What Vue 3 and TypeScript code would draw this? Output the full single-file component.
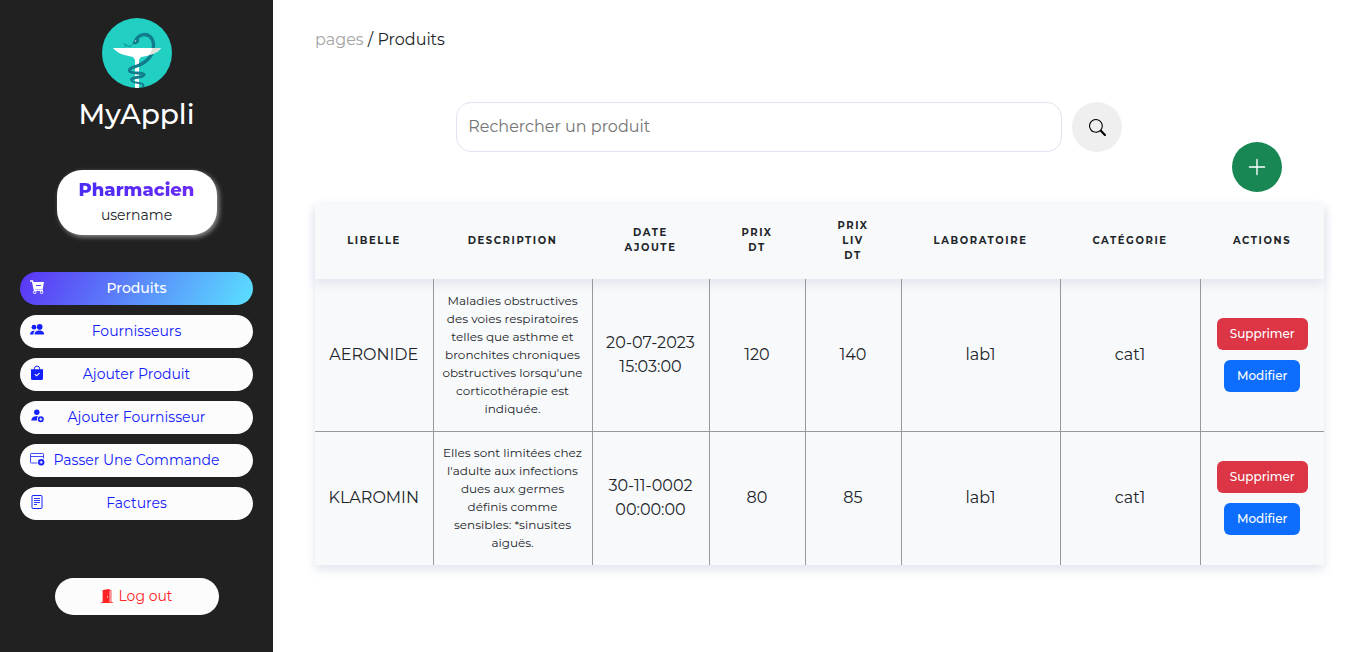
<script setup lang="ts">
import { ref } from 'vue'

interface NavItem {
  label: string
  icon: string
}

interface Product {
  name: string
  description: string
  date: string
  price: number
  deliveryPrice: number
  lab: string
  category: string
}

const active = ref('Produits')
const query = ref('')

const navItems: NavItem[] = [
  { label: 'Produits', icon: 'cart' },
  { label: 'Fournisseurs', icon: 'people' },
  { label: 'Ajouter Produit', icon: 'bag' },
  { label: 'Ajouter Fournisseur', icon: 'person-add' },
  { label: 'Passer Une Commande', icon: 'window-add' },
  { label: 'Factures', icon: 'document' },
]

const columns = [
  { key: 'name', label: 'Libelle' },
  { key: 'description', label: 'Description' },
  { key: 'date', label: 'Date\nAjoute' },
  { key: 'price', label: 'Prix\nDT' },
  { key: 'delivery', label: 'Prix\nLiv\nDT' },
  { key: 'lab', label: 'Laboratoire' },
  { key: 'category', label: 'Catégorie' },
  { key: 'actions', label: 'Actions' },
]

const products: Product[] = [
  {
    name: 'AERONIDE',
    description:
      "Maladies obstructives\ndes voies respiratoires\ntelles que asthme et\nbronchites chroniques\nobstructives lorsqu'une\ncorticothérapie est\nindiquée.",
    date: '20-07-2023\n15:03:00',
    price: 120,
    deliveryPrice: 140,
    lab: 'lab1',
    category: 'cat1',
  },
  {
    name: 'KLAROMIN',
    description:
      "Elles sont limitées chez\nl'adulte aux infections\ndues aux germes\ndéfinis comme\nsensibles: *sinusites\naiguës.",
    date: '30-11-0002\n00:00:00',
    price: 80,
    deliveryPrice: 85,
    lab: 'lab1',
    category: 'cat1',
  },
]
</script>

<template>
  <div class="layout">
    <aside class="sidebar">
      <svg class="logo" viewBox="0 0 70 70" aria-hidden="true">
        <defs>
          <clipPath id="logo-clip"><circle cx="35" cy="35" r="35" /></clipPath>
        </defs>
        <g clip-path="url(#logo-clip)">
          <rect width="70" height="70" fill="#22cfc3" />
          <path d="M33.500 23C36 17 43 14.500 48 18.500C52 22 52.800 30 49.500 36.500C46.500 42 42 45 37 47" fill="none" stroke="#107c8c" stroke-width="3.400" />
          <path d="M11 30H59C56 34.500 48 38 39 39L37 42V70H33V42L31 39C22 37.500 14 34.500 11 30Z" fill="#fff" />
          <path d="M50 30H59C57 33.500 53 35.500 48 37Z" fill="#dfe3dc" />
          <path d="M48.500 38C45 43.500 41 46 35 48C30 49.500 27 50.500 27.500 53C29 56.500 41 53.500 42 56.500C42.500 60 31 58.500 29.500 61.500" fill="none" stroke="#107c8c" stroke-width="3" stroke-linecap="round" />
          <path d="M29.500 61.500C29 65.500 38 64 40.500 66C42 67 41.500 68.500 40 69.500" fill="none" stroke="#107c8c" stroke-width="2" />
          <path d="M30.500 26C31 23 33 20.500 35.500 20.500C38 21 37.500 24 36 25C34.500 26.500 32 26.500 30.500 26Z" fill="#107c8c" />
          <circle cx="33.500" cy="23" r=".7" fill="#d8e8dc" />
          <path d="M30.500 26.500C28.500 29 26 28.500 24.500 27L21.500 25.500M25 27.500L22.500 28.500" fill="none" stroke="#107c8c" stroke-width=".8" />
        </g>
      </svg>
      <h1 class="brand">MyAppli</h1>

      <div class="profile">
        <strong class="role">Pharmacien</strong>
        <span class="username">username</span>
      </div>

      <nav class="nav">
        <a
          v-for="item in navItems"
          :key="item.label"
          href="#"
          class="nav-link"
          :class="{ active: active === item.label }"
          @click.prevent="active = item.label"
        >
          <svg class="nav-icon" viewBox="0 0 16 16" fill="currentColor" aria-hidden="true">
            <template v-if="item.icon === 'cart'">
              <path d="M1 2H3.500L5.500 11.200H14" fill="none" stroke="currentColor" stroke-width="1.400" />
              <path fill-rule="evenodd" d="M3.800 3H15L13.700 10.200H5.300ZM7 6H12V7H7Z" />
              <circle cx="5.700" cy="13.300" r="1.300" fill="none" stroke="currentColor" />
              <circle cx="12.600" cy="13.300" r="1.300" fill="none" stroke="currentColor" />
            </template>
            <template v-else-if="item.icon === 'people'">
              <circle cx="5" cy="5.200" r="2.400" />
              <circle cx="10.700" cy="4.900" r="2.800" />
              <path d="M1 12.500C1 9.800 2.800 8.500 5.800 8.700C4.900 9.700 4.500 11 4.500 12.500ZM5.500 12.500C5.500 9.700 7.400 8.500 10.300 8.500S15.200 9.800 15.200 12.500Z" />
            </template>
            <template v-else-if="item.icon === 'bag'">
              <path d="M5.300 5V3.800A2.700 2.700 0 0 1 10.700 3.800V5" fill="none" stroke="currentColor" />
              <path fill-rule="evenodd" d="M2 4.300H14V13.500Q14 15 12.500 15H3.500Q2 15 2 13.500ZM6.200 8.800L5.500 9.600L7.500 11.500L11 8.400L10.300 7.700L7.500 10.100Z" />
            </template>
            <template v-else-if="item.icon === 'person-add'">
              <circle cx="7.800" cy="4.200" r="2.700" />
              <path d="M2.300 12.600C2.300 9.800 4.200 8.200 7.200 8.200H9.200C8 9.200 7.600 11 8.200 12.600Z" />
              <path fill-rule="evenodd" d="M11.800 8.200A3 3 0 1 0 11.800 14.200A3 3 0 1 0 11.800 8.200ZM11.300 9.700H12.300V10.700H13.300V11.700H12.300V12.700H11.300V11.700H10.300V10.700H11.300Z" />
            </template>
            <template v-else-if="item.icon === 'window-add'">
              <path d="M8.500 12H2.200Q1.500 12 1.500 11.300V3.200Q1.500 2.500 2.200 2.500H13.800Q14.500 2.500 14.500 3.200V7.500M1.500 5.500H14.500" fill="none" stroke="currentColor" stroke-width=".8" />
              <path fill-rule="evenodd" d="M12.200 8A3.200 3.200 0 1 0 12.200 14.400A3.200 3.200 0 1 0 12.200 8ZM11.700 9.700H12.700V10.700H13.700V11.700H12.700V12.700H11.700V11.700H10.700V10.700H11.700Z" />
            </template>
            <template v-else>
              <rect x="3" y="1.500" width="10" height="13" rx="1" fill="none" stroke="currentColor" />
              <path d="M5 4.500H11M5 6.500H11M5 8.500H11M5 10.500H8" fill="none" stroke="currentColor" stroke-width=".9" />
            </template>
          </svg>
          <span class="nav-label">{{ item.label }}</span>
        </a>
      </nav>

      <button type="button" class="logout">
        <svg class="logout-icon" viewBox="0 0 16 16" fill="currentColor" aria-hidden="true">
          <path d="M1.500 15a.5.5 0 0 0 0 1h13a.5.5 0 0 0 0-1H13V2.500A1.500 1.500 0 0 0 11.500 1H11V.5a.5.5 0 0 0-.57-.495l-7 1A.5.5 0 0 0 3 1.500V15H1.500zM11 2h.5a.5.5 0 0 1 .5.5V15h-1V2zm-2.500 8c-.276 0-.5-.448-.5-1s.224-1 .5-1 .5.448.5 1-.224 1-.5 1z" />
        </svg>
        Log out
      </button>
    </aside>

    <main class="content">
      <div class="breadcrumb"><a href="#" class="crumb">pages</a> / Produits</div>

      <form class="search" role="search" @submit.prevent>
        <input v-model="query" class="search-input" type="text" placeholder="Rechercher un produit" aria-label="Rechercher un produit" />
        <button type="submit" class="round search-button" aria-label="Rechercher">
          <svg class="round-icon" viewBox="0 0 16 16" fill="currentColor" aria-hidden="true">
            <path d="M11.742 10.344a6.500 6.500 0 1 0-1.397 1.398h-.001c.03.04.062.078.098.115l3.850 3.850a1 1 0 0 0 1.415-1.414l-3.850-3.850a1.007 1.007 0 0 0-.115-.1zM12 6.500a5.500 5.500 0 1 1-11 0 5.500 5.500 0 0 1 11 0z" />
          </svg>
        </button>
      </form>

      <div class="toolbar">
        <button type="button" class="round add-button" aria-label="Ajouter">
          <svg class="add-icon" viewBox="0 0 16 16" fill="currentColor" aria-hidden="true">
            <path d="M8 2a.5.5 0 0 1 .5.5v5h5a.5.5 0 0 1 0 1h-5v5a.5.5 0 0 1-1 0v-5h-5a.5.5 0 0 1 0-1h5v-5A.5.5 0 0 1 8 2Z" />
          </svg>
        </button>
      </div>

      <table class="products">
        <colgroup>
          <col v-for="column in columns" :key="column.key" :class="`col-${column.key}`" />
        </colgroup>
        <thead>
          <tr>
            <th v-for="column in columns" :key="column.key" scope="col">{{ column.label }}</th>
          </tr>
        </thead>
        <tbody>
          <tr v-for="product in products" :key="product.name">
            <td>{{ product.name }}</td>
            <td class="description">{{ product.description }}</td>
            <td>{{ product.date }}</td>
            <td>{{ product.price }}</td>
            <td>{{ product.deliveryPrice }}</td>
            <td>{{ product.lab }}</td>
            <td>{{ product.category }}</td>
            <td>
              <div class="actions">
                <button type="button" class="btn danger">Supprimer</button>
                <button type="button" class="btn primary">Modifier</button>
              </div>
            </td>
          </tr>
        </tbody>
      </table>
    </main>
  </div>
</template>

<style>
body {
  margin: 0;
  background: #fff;
}
</style>

<style scoped>
.layout {
  display: flex;
  min-height: 100vh;
  font-family: Montserrat, Inter, "Open Sans", sans-serif;
  font-size: 16px;
  font-weight: 400;
  line-height: 24px;
  color: #212529;
}

.layout *,
.layout {
  box-sizing: border-box;
}

button,
input {
  font: inherit;
}

button {
  border: 0;
  cursor: pointer;
}

.sidebar {
  flex: 0 0 273px;
  display: flex;
  flex-direction: column;
  align-items: center;
  padding: 18px 20px 37px;
  background: #212121;
}

.logo {
  width: 70px;
  height: 70px;
}

.brand {
  margin: 8px 0 38px;
  font-size: 28px;
  font-weight: 500;
  line-height: 36px;
  color: #fff;
}

.profile {
  display: flex;
  flex-direction: column;
  align-items: center;
  width: 160px;
  padding: 8px 0 6px;
  border-radius: 25px;
  background: #fff;
  box-shadow: 2px 2px 5px rgba(255, 255, 255, 0.5);
}

.role {
  font-size: 18px;
  font-weight: 800;
  line-height: 24px;
  color: transparent;
  background: linear-gradient(90deg, #4a2cf5, #6a2cf5);
  background-clip: text;
  -webkit-background-clip: text;
}

.username {
  font-size: 14px;
  line-height: 27px;
}

.nav {
  display: flex;
  flex-direction: column;
  align-self: stretch;
  gap: 10px;
  margin: 37px 0 58px;
}

.nav-link {
  display: grid;
  grid-template-columns: 15px 1fr 15px;
  align-items: center;
  height: 33px;
  padding: 0 9px 2px;
  border-radius: 17px;
  background: #fcfcfc;
  color: #1320fb;
  font-size: 14px;
  font-weight: 400;
  text-decoration: none;
}

.nav-link.active {
  background: linear-gradient(120deg, #5b33f5, #5ae1ff);
  color: #fff;
  font-weight: 500;
}

.nav-icon {
  width: 16px;
  height: 16px;
  margin-bottom: 1px;
}

.nav-label {
  text-align: center;
  white-space: nowrap;
}

.logout {
  display: flex;
  align-items: center;
  justify-content: center;
  gap: 4px;
  width: 164px;
  height: 37px;
  padding: 0 0 2px;
  border-radius: 19px;
  background: #fcfcfc;
  color: #ff2424;
  font-size: 14px;
  font-weight: 400;
}

.logout-icon {
  width: 14px;
  height: 14px;
}

.content {
  flex: 1;
  min-width: 0;
  padding: 28px 40px 40px 42px;
}

.crumb {
  color: #a5a5a5;
  text-decoration: none;
}

.search {
  display: flex;
  gap: 10px;
  margin: 50px 20% 0 14%;
}

.search-input {
  flex: 1;
  min-width: 0;
  height: 50px;
  padding: 0 11px 2px;
  border: 1px solid #e1e3ef;
  border-radius: 15px;
  outline: 0;
  background: #fff;
  color: #212529;
}

.search-input::placeholder {
  color: #757575;
  opacity: 1;
}

.round {
  display: grid;
  flex: none;
  place-items: center;
  width: 50px;
  height: 50px;
  padding: 0;
  border-radius: 50%;
}

.search-button {
  background: #efefef;
  color: #000;
}

.round-icon {
  width: 17px;
  height: 17px;
}

.toolbar {
  display: flex;
  justify-content: flex-end;
  margin: -10px 42px 11px 0;
}

.add-button {
  background: #198754;
  color: #fff;
}

.add-icon {
  width: 22px;
  height: 22px;
}

.products {
  width: 100%;
  table-layout: fixed;
  border-collapse: collapse;
  background: #f8f9fb;
  box-shadow: 0 5px 10px #e1e5ee;
  text-align: center;
}

.col-name {
  width: 118px;
}

.col-date {
  width: 117px;
}

.col-description,
.col-lab {
  width: 159px;
}

.col-price,
.col-delivery {
  width: 96px;
}

.col-category {
  width: 140px;
}

.col-actions {
  width: 124px;
}

thead {
  box-shadow: 0 5px 10px #e1e5ee;
}

th {
  height: 76px;
  padding: 0 8px 2px;
  font-size: 10px;
  font-weight: 700;
  line-height: 15px;
  letter-spacing: 0.16em;
  text-transform: uppercase;
  white-space: pre-line;
}

td {
  padding: 13px 6px;
  border-right: 1px solid #97999c;
  white-space: pre-line;
}

td:last-child {
  border-right: 0;
}

tbody tr:not(:last-child) td {
  border-bottom: 1px solid #97999c;
}

tbody tr + tr td {
  padding-top: 12px;
}

.description {
  font-size: 12px;
  line-height: 18px;
}

.actions {
  display: flex;
  flex-direction: column;
  align-items: center;
  gap: 10px;
}

.btn {
  height: 32px;
  padding: 0 13px;
  border-radius: 6px;
  color: #fff;
  font-size: 12px;
  font-weight: 500;
  line-height: 20px;
}

.danger {
  background: #dc3545;
}

.primary {
  background: #0d6efd;
}
</style>
